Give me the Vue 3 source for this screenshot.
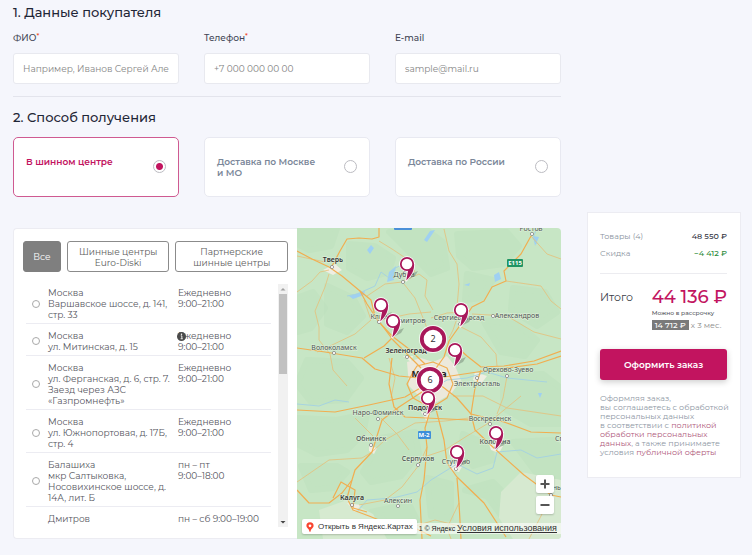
<script setup>
import { ref } from 'vue'

const fields = [
  { id: 'name', label: 'ФИО', required: true, type: 'text', placeholder: 'Например, Иванов Сергей Александрович' },
  { id: 'phone', label: 'Телефон', required: true, type: 'tel', placeholder: '+7 000 000 00 00' },
  { id: 'email', label: 'E-mail', required: false, type: 'email', placeholder: 'sample@mail.ru' }
]

const methods = [
  { id: 'center', label: 'В шинном центре' },
  { id: 'moscow', label: 'Доставка по Москве и МО' },
  { id: 'russia', label: 'Доставка по России' }
]
const method = ref('center')

const filters = [
  { id: 'all', lines: ['Все'] },
  { id: 'own', lines: ['Шинные центры', 'Euro-Diski'] },
  { id: 'partner', lines: ['Партнерские', 'шинные центры'] }
]
const filter = ref('all')

const places = [
  { id: 1, lines: ['Москва', 'Варшавское шоссе, д. 141,', 'стр. 33'], hours: ['Ежедневно', '9:00–21:00'] },
  { id: 2, lines: ['Москва', 'ул. Митинская, д. 15'], hours: ['Ежедневно', '9:00–21:00'], info: true },
  { id: 3, lines: ['Москва', 'ул. Ферганская, д. 6, стр. 7.', 'Заезд через АЗС', '«Газпромнефть»'], hours: ['Ежедневно', '9:00–21:00'] },
  { id: 4, lines: ['Москва', 'ул. Южнопортовая, д. 17Б,', 'стр. 4'], hours: ['Ежедневно', '9:00–21:00'] },
  { id: 5, lines: ['Балашиха', 'мкр Салтыковка,', 'Носовихинское шоссе, д.', '14А, лит. Б'], hours: ['пн – пт', '9:00–18:00'] },
  { id: 6, lines: ['Дмитров'], hours: ['пн – сб 9:00–19:00'] }
]
const place = ref(null)

const forests = [
  'M0 0H40L34 18L12 22L0 16Z',
  'M52 16L78 18L96 30L92 44L70 50L52 40Z',
  'M0 70L16 64L28 80L14 100L0 104Z',
  'M30 58L56 70L66 88L50 104L30 96Z',
  'M92 4L130 2L146 14L150 40L134 46L112 24Z',
  'M160 6L210 4L222 18L206 36L176 40L162 28Z',
  'M170 46L196 52L184 70L168 72Z',
  'M216 60L248 64L260 84L240 98L214 82Z',
  'M186 92L220 96L240 112L228 128L204 124Z',
  'M10 132L50 134L64 150L48 172L14 174L0 156Z',
  'M0 190L40 192L70 186L66 206L50 222L20 226L0 216Z',
  'M4 238L40 238L50 244L36 260L14 262Z',
  'M84 210L118 204L122 226L104 248L74 254L66 244Z',
  'M74 284L112 276L120 292L96 298Z',
  'M206 148L246 146L264 160V196L234 196L206 180Z',
  'M166 206L190 216L196 232L176 238L164 222Z',
  'M216 214L256 212L264 222V254L240 246Z',
  'M168 262L196 254L214 272L206 290L190 268Z',
  'M130 250L154 256L154 290L134 288Z'
]

const thinRoads = [
  'M0 28L28 34M0 64L15 53L23 44L32 42',
  'M32 46L28 59L18 83L22 99L22 112L33 126L36 142L50 158',
  'M82 13L95 21L110 31L118 44',
  'M70 68L88 56L105 54L122 46L130 52L128 68L136 82',
  'M67 72L74 92L58 106L33 118L20 124',
  'M107 56L118 70L126 90L134 110',
  'M84 92L112 86L134 84',
  'M134 90L150 85L168 84',
  'M147 1L152 23L160 36L162 56L160 79',
  'M209 53L244 58L254 73L264 81',
  'M234 8L250 26L264 31',
  'M175 86L210 88L237 104L264 111',
  'M164 99L184 109L199 126L200 138',
  'M0 254L32 232L65 230L75 224',
  'M62 277L88 272L105 259L122 237L130 219',
  'M75 224L88 212L118 195L148 193L172 190',
  'M58 190L76 208M84 190L100 206L112 222',
  'M130 228L148 222L170 208L190 196L224 168',
  'M162 275L150 300L154 311M112 300L138 292L162 298',
  'M156 168L186 168L210 180L264 188',
  'M210 148L206 170L200 186',
  'M254 267L244 288L232 311M164 79L156 102L152 110',
  'M92 130L98 150L94 170'
]

const roads = [
  'M0 23L15 31L32 39L45 48L63 63L70 76L82 94L95 108L112 121L128 136',
  'M63 63L74 72L78 88L96 112L108 124L124 140',
  'M35 38L43 23L50 11L62 10L75 11L82 9L82 0',
  'M0 120L28 124L65 130L78 141L102 148L122 150',
  'M67 130L87 118L95 110M95 130L92 156L97 179L108 189L172 192',
  'M234 8L224 26L207 43L209 53L195 59L187 73L175 79L164 96L152 113L147 129L137 143',
  'M264 123L237 133L207 138L184 139L170 128L160 119',
  'M264 128L240 136L187 143L147 149L136 150',
  'M0 182L38 184L72 177L108 169L125 159',
  'M0 262L12 275L32 275L45 265L55 252L58 242L75 224L85 192L102 179L128 162',
  'M55 252L50 270L56 282L72 288L92 296L110 296L134 308',
  'M132 162L134 180L128 200L130 219L127 252L123 272L125 311',
  'M134 160L140 185L147 212L150 235L160 249L187 275L209 309',
  'M160 250L162 275L164 311',
  'M142 156L160 170L174 186L178 202L199 222L227 247L254 267L264 269',
  'M184 142L178 160L174 186L207 194L234 204L264 205',
  'M116 144L110 156L116 170L134 180L150 170L156 156L150 140L136 134L120 138Z',
  'M36 270L44 254L58 262L56 280L70 284'
]

const rivers = [
  'M112 34L98 40L92 50L84 44L78 58L60 66L50 68',
  'M0 176L22 178L38 172L52 174',
  'M130 164L150 152L170 150L190 144L210 150L250 154',
  'M60 284L70 272L96 270L120 264L134 252L160 236L180 246L196 240L200 224L224 222L240 230L264 226',
  'M240 0L236 10L240 16'
]

const cities = [
  { x: 36, y: 34, name: 'Тверь', dx: 35, dy: 39, bold: true },
  { x: 107, y: 49, name: 'Дубна', dx: 106, dy: 54 },
  { x: 82, y: 91, name: 'Клин', dx: 82, dy: 94 },
  { x: 113, y: 95, name: 'Дмитров', dx: 127, dy: 93 },
  { x: 37, y: 122, name: 'Волоколамск', dx: 37, dy: 125 },
  { x: 109, y: 125, name: 'Зеленоград', dx: 110, dy: 129, bold: true },
  { x: 234, y: 3, name: 'Ростов', dx: 235, dy: 6 },
  { x: 162, y: 92, name: 'Сергиев Посад', dx: 163, dy: 96 },
  { x: 220, y: 90, name: 'Александров', dx: 196, dy: 88 },
  { x: 211, y: 144, name: 'Орехово-Зуево', dx: 210, dy: 148 },
  { x: 180, y: 158, name: 'Электросталь', dx: 180, dy: 150 },
  { x: 81, y: 187, name: 'Наро-Фоминск', dx: 81, dy: 191 },
  { x: 128, y: 182, name: 'Подольск', dx: 128, dy: 186, bold: true },
  { x: 74, y: 213, name: 'Обнинск', dx: 74, dy: 217, medium: true },
  { x: 193, y: 193, name: 'Воскресенск', dx: 193, dy: 196 },
  { x: 198, y: 216, name: 'Коломна', dx: 199, dy: 220, medium: true },
  { x: 121, y: 233, name: 'Серпухов', dx: 121, dy: 237, medium: true },
  { x: 159, y: 236, name: 'Ступино', dx: 159, dy: 241 },
  { x: 55, y: 272, name: 'Калуга', dx: 55, dy: 277, bold: true },
  { x: 101, y: 275, name: 'Алексин', dx: 101, dy: 278 },
  { x: 266, y: 213, name: 'Спас', dx: 270, dy: 220 },
  { x: 252, y: 262, name: 'Рязань', dx: 254, dy: 267 }
]

const pins = [
  [110, 36], [84, 77], [96, 93], [164, 82], [158, 122], [131, 170], [199, 205], [160, 224]
]
const clusters = [
  { x: 136, y: 111, count: 2 },
  { x: 133, y: 152, count: 6 }
]
</script>

<template>
  <main class="page">
    <form class="form" @submit.prevent>
      <h2 class="heading">1. Данные покупателя</h2>
      <div class="thirds fields">
        <div v-for="f in fields" :key="f.id" class="field">
          <label :for="f.id" class="label">{{ f.label }}<sup v-if="f.required" class="star">*</sup></label>
          <input :id="f.id" class="input" :type="f.type" :placeholder="f.placeholder" />
        </div>
      </div>

      <h2 class="heading second">2. Способ получения</h2>
      <div class="thirds">
        <label v-for="m in methods" :key="m.id" class="method" :class="{ active: method === m.id }">
          <span class="method-name">{{ m.label }}</span>
          <input v-model="method" class="radio" type="radio" name="method" :value="m.id" />
        </label>
      </div>

      <section class="pickup">
        <div class="list-side">
          <div class="filters">
            <button
              v-for="f in filters"
              :key="f.id"
              type="button"
              class="filter"
              :class="{ on: filter === f.id }"
              @click="filter = f.id"
            >
              <span v-for="l in f.lines" :key="l" class="line">{{ l }}</span>
            </button>
          </div>
          <div class="scroller">
            <div class="places">
              <label v-for="p in places" :key="p.id" class="place">
                <input v-model="place" class="dot" type="radio" name="place" :value="p.id" />
                <span class="address"><span v-for="l in p.lines" :key="l" class="line">{{ l }}</span></span>
                <span class="hours">
                  <span v-for="l in p.hours" :key="l" class="line">{{ l }}</span>
                  <svg v-if="p.info" class="info" viewBox="0 0 10 10" aria-hidden="true">
                    <circle cx="5" cy="5" r="5" fill="#4a4a4a" />
                    <circle cx="5" cy="2.6" r=".8" fill="#fff" />
                    <path d="M4.2 4.3H5.4V7.3M4 7.5H6.4" fill="none" stroke="#fff" />
                  </svg>
                </span>
              </label>
            </div>
            <div class="track" aria-hidden="true">
              <svg class="arrow" viewBox="0 0 10 10"><path d="M2.5 6.5L5 4L7.5 6.5Z" fill="#a0a0a0" /></svg>
              <div class="thumb"></div>
              <svg class="arrow" viewBox="0 0 10 10"><path d="M2.5 4L5 6.5L7.5 4Z" fill="#444" /></svg>
            </div>
          </div>
        </div>

        <div class="map">
          <svg class="map-art" viewBox="0 0 264 311" preserveAspectRatio="xMidYMid slice" role="img" aria-label="Карта">
            <rect width="264" height="311" fill="#c7e6c5" />
            <path v-for="d in forests" :key="d" :d="d" fill="#bee1be" opacity=".55" stroke="#bee1be" stroke-width="6" stroke-linejoin="round" />
            <path d="M204 264L224 244L264 252V311H216L202 290Z" fill="#d6e9d0" />
            <path d="M22 282L50 272L76 286L90 311H26Z" fill="#d6ead0" />
            <path d="M110 134L124 130L136 134L150 128L158 138L164 152L154 166L140 174L122 168L112 158Z" fill="#ece9dc" />
            <path d="M26 42L38 36L45 42L36 47ZM72 218L80 220L77 226L72 223ZM152 234L166 237L162 244L154 242ZM192 216L206 218L202 225L194 222ZM178 144L190 148L184 156L176 152ZM106 128L116 128L114 134ZM160 94L168 94L164 100ZM124 184L134 184L130 194ZM50 275L64 277L58 284Z" fill="#efeee2" />
            <path d="M70 22L74 17L77 20L73 26ZM197 47L202 44L204 51L198 54ZM92 44L99 38L97 52L90 54ZM236 8L242 9L238 18ZM127 12L133 3L138 2L130 14ZM52 68L68 63L67 67L56 71ZM167 57L173 55L172 58ZM241 165L245 165L243 170Z" fill="#9fd0f2" />
            <g fill="none" stroke="#a6d3e0" stroke-linejoin="round"><path v-for="d in rivers" :key="d" :d="d" /></g>
            <g fill="none" stroke="#e6bf78" stroke-linejoin="round"><path v-for="d in thinRoads" :key="d" :d="d" stroke-width=".8" /></g>
            <g fill="none" stroke="#f1ae50" stroke-linejoin="round"><path v-for="d in roads" :key="d" :d="d" stroke-width="1.2" /></g>
            <rect x="97" y="-4" width="18" height="6" rx="1" fill="#4a8fd8" />
            <rect x="210" y="31" width="16" height="8" rx="1" fill="#1f9463" />
            <text class="shield" x="218" y="37">E115</text>
            <rect x="121" y="203" width="13" height="8" rx="1" fill="#3f8fd9" />
            <text class="shield" x="127" y="209">М-2</text>
            <text class="capital" x="132" y="149">Москва</text>
            <g v-for="c in cities" :key="c.name">
              <circle :cx="c.dx" :cy="c.dy" r="1.6" fill="#fff" stroke="#777" stroke-width=".7" />
              <text class="city" :class="{ medium: c.medium, strong: c.bold }" :x="c.x" :y="c.y">{{ c.name }}</text>
            </g>
            <g v-for="c in clusters" :key="c.count">
              <circle :cx="c.x" :cy="c.y" r="14" fill="#fff" opacity=".8" />
              <circle :cx="c.x" :cy="c.y" r="11.2" fill="#fff" stroke="#a8185a" stroke-width="3.8" />
              <text class="count" :x="c.x" :y="c.y + 3">{{ c.count }}</text>
            </g>
            <g v-for="[x, y] in pins" :key="`${x}-${y}`" :transform="`translate(${x} ${y})`">
              <path d="M0 16L6 9L11 7L8 12Z" fill="#5f6f62" opacity=".4" />
              <path d="M7.2 0C7.2 6 5 11 -.8 16.500L1.200 6Z" fill="#fff" stroke="#fff" stroke-width="1.8" stroke-linejoin="round" />
              <circle r="7.8" fill="#fff" />
              <path d="M7.2 0C7.2 6 5 11 -.8 16.500L1.200 6Z" fill="#a8185a" />
              <circle r="6.2" fill="#fff" stroke="#a8185a" stroke-width="1.8" />
            </g>
          </svg>
          <a href="#" class="open-map">
            <svg class="open-icon" viewBox="0 0 10 12" aria-hidden="true">
              <path d="M5 0A4.5 4.5 0 0 1 9.5 4.5C9.5 7.5 6 8 5.6 12H4.4C4 8 .5 7.5 .5 4.5A4.5 4.5 0 0 1 5 0Z" fill="#f8442f" />
              <circle cx="5" cy="4.5" r="1.7" fill="#fff" />
            </svg>
            Открыть в Яндекс.Картах
          </a>
          <div class="zoom">
            <button type="button" class="zoom-btn" aria-label="Приблизить">
              <svg viewBox="0 0 10 10"><path d="M5 .5V9.5M.5 5H9.5" stroke="#555" stroke-width="2" /></svg>
            </button>
            <button type="button" class="zoom-btn" aria-label="Отдалить">
              <svg viewBox="0 0 10 10"><path d="M.5 5H9.5" stroke="#555" stroke-width="2" /></svg>
            </button>
          </div>
          <p class="copyright">1 © Яндекс <a href="#" class="terms">Условия использования</a></p>
        </div>
      </section>
    </form>

    <aside class="summary">
      <dl class="sums">
        <div class="sum"><dt>Товары (4)</dt><dd>48 550 ₽</dd></div>
        <div class="sum"><dt>Скидка</dt><dd class="discount">−4 412 ₽</dd></div>
      </dl>
      <div class="total">
        <span class="total-name">Итого</span>
        <div class="total-side">
          <strong class="price">44 136 ₽</strong>
          <span class="credit-note">Можно в рассрочку</span>
          <span class="credit"><b class="credit-sum">14 712 ₽</b> x 3 мес.</span>
        </div>
      </div>
      <button type="button" class="submit">Оформить заказ</button>
      <p class="legal">
        Оформляя заказ,<br />вы соглашаетесь с обработкой<br />персональных данных<br />в соответствии с
        <a href="#">политикой<br />обработки персональных<br />данных</a>, а также принимаете<br />условия
        <a href="#">публичной оферты</a>
      </p>
    </aside>
  </main>
</template>

<style>
body {
  margin: 0;
  background: #f5f6fc;
}
</style>

<style scoped>
.page {
  display: grid;
  grid-template-columns: minmax(0, 1fr) 154px;
  gap: 26px;
  align-items: start;
  padding: 2px 11px 15px 13px;
  font-family: Montserrat, Inter, "Noto Sans", sans-serif;
  font-size: 9px;
  line-height: 11px;
  color: #55565e;
}
.page *,
.page *::before {
  box-sizing: border-box;
}
button,
input {
  font: inherit;
  margin: 0;
}
.heading {
  margin: 0;
  font-size: 13px;
  line-height: 20px;
  font-weight: 500;
  color: #1f2637;
}
.heading.second {
  margin: 10px 0;
}
.thirds {
  display: grid;
  grid-template-columns: repeat(3, minmax(0, 1fr));
  gap: 25px;
}
.fields {
  padding: 9px 0 12px;
  border-bottom: 1px solid #e3e4ec;
}
.label {
  display: block;
  height: 22px;
  line-height: 14px;
  font-weight: 500;
  color: #3f4454;
}
.star {
  color: #f0502d;
  font-size: 7px;
  line-height: 0;
  vertical-align: 2px;
}
.input {
  display: block;
  width: 100%;
  height: 31px;
  padding: 0 9px;
  border: 1px solid #e8e9ef;
  border-radius: 3px;
  background: #fff;
  color: #333;
}
.input::placeholder {
  color: #858585;
  opacity: 1;
}
.method {
  display: flex;
  justify-content: space-between;
  align-items: flex-start;
  gap: 10px;
  min-height: 60px;
  padding: 18px 12px 15px;
  border: 1px solid #e8e9f1;
  border-radius: 5px;
  background: #fff;
  color: #7b8799;
  font-weight: 600;
}
.method-name {
  max-width: 104px;
}
.method.active {
  border-color: #cf5a91;
  color: #c2145f;
}
.radio,
.dot {
  appearance: none;
  flex: none;
  border: 1px solid #bcbcc2;
  border-radius: 50%;
  background: #fff;
}
.radio {
  width: 13px;
  height: 13px;
  margin-top: 4px;
}
.radio:checked {
  background: radial-gradient(circle, #c2145f 3px, #fff 4px);
}
.pickup {
  display: grid;
  grid-template-columns: minmax(0, 284fr) minmax(0, 264fr);
  margin-top: 31px;
}
.list-side {
  padding: 12px 9px 11px;
  border: 1px solid #ececf2;
  border-right: 0;
  border-radius: 4px 0 0 4px;
  background: #fff;
}
.filters {
  display: grid;
  grid-template-columns: 38fr 103fr 113fr;
  gap: 6px;
}
.filter {
  height: 31px;
  padding: 0;
  border: 1px solid #8b8b8b;
  border-radius: 3px;
  background: #fff;
  color: #5c5c5c;
}
.filter.on {
  border-color: #7f7f7f;
  background: #7f7f7f;
  color: #fff;
}
.line {
  display: block;
  white-space: nowrap;
}
.scroller {
  display: flex;
  justify-content: space-between;
  height: 243px;
  margin-top: 12px;
  overflow: hidden;
}
.places {
  flex: 1;
  margin: 0 7px 0 3px;
}
.place {
  display: grid;
  grid-template-columns: 14px minmax(0, 122fr) minmax(0, 93fr);
  column-gap: 8px;
  align-items: center;
  padding: 6px 0 3px;
  border-bottom: 1px solid #ececf2;
}
.place:first-child {
  padding-top: 3px;
}
.place:last-child {
  min-height: 60px;
  border: 0;
}
.dot {
  justify-self: end;
  width: 8px;
  height: 8px;
  border-color: #a9a9a9;
}
.address,
.hours {
  align-self: start;
}
.hours {
  position: relative;
}
.info {
  position: absolute;
  top: 2px;
  left: -1px;
  width: 9px;
  height: 9px;
}
.track {
  display: flex;
  flex-direction: column;
  width: 10px;
  background: #f1f1f1;
}
.arrow {
  width: 10px;
  height: 10px;
}
.thumb {
  width: 8px;
  height: 80px;
  margin: 0 1px auto;
  background: #c1c1c1;
}
.map {
  position: relative;
  overflow: hidden;
  border-radius: 0 4px 4px 0;
}
.map-art {
  position: absolute;
  inset: 0;
  width: 100%;
  height: 100%;
}
.city,
.capital,
.shield,
.count {
  font-family: "Noto Sans", sans-serif;
  text-anchor: middle;
}
.city {
  font-size: 7px;
  fill: #4c5550;
  paint-order: stroke;
  stroke: #e2f1dd;
  stroke-width: 1px;
}
.city.medium {
  font-weight: 500;
}
.city.strong {
  font-weight: 600;
  fill: #333;
}
.capital {
  font-size: 9px;
  font-weight: 700;
  fill: #222;
}
.shield {
  font-size: 6px;
  font-weight: 700;
  fill: #fff;
}
.count {
  font-size: 9px;
  fill: #333;
}
.open-map {
  position: absolute;
  left: 5px;
  bottom: 5px;
  display: flex;
  align-items: center;
  gap: 4px;
  height: 15px;
  padding: 0 4px;
  border-radius: 2px;
  background: #fff;
  box-shadow: 0 1px 2px rgba(0, 0, 0, 0.2);
  font-family: "Liberation Sans", sans-serif;
  font-size: 8px;
  color: #333;
  text-decoration: none;
  white-space: nowrap;
}
.open-icon {
  width: 8px;
  height: 10px;
}
.zoom {
  position: absolute;
  right: 7px;
  bottom: 25px;
  display: grid;
  gap: 3px;
}
.zoom-btn {
  display: grid;
  place-items: center;
  width: 18px;
  height: 18px;
  padding: 0;
  border: 0;
  border-radius: 2px;
  background: #fff;
  box-shadow: 0 1px 2px rgba(0, 0, 0, 0.2);
}
.zoom-btn svg {
  width: 10px;
  height: 10px;
}
.copyright {
  position: absolute;
  right: 0;
  bottom: 5px;
  margin: 0;
  padding: 0 4px;
  background: rgba(255, 255, 255, 0.6);
  font-family: "Liberation Sans", sans-serif;
  font-size: 7px;
  color: #222;
  white-space: nowrap;
}
.terms {
  font-size: 9px;
  color: #333;
}
.summary {
  margin-top: 210px;
  padding: 18px 13px 20px 12px;
  border: 1px solid #ececf2;
  background: #fff;
}
.sums {
  display: grid;
  gap: 6px;
  margin: 0;
  padding-bottom: 14px;
  border-bottom: 1px solid #ececf0;
  font-size: 8px;
}
.sum {
  display: flex;
  justify-content: space-between;
}
.sums dt {
  color: #8b93a0;
}
.sums dd {
  margin: 0;
  font-weight: 500;
  color: #2f323d;
}
.sums .discount {
  color: #2b8a3a;
}
.total {
  display: flex;
  justify-content: space-between;
  padding-top: 13px;
}
.total-name {
  font-size: 11px;
  line-height: 20px;
  color: #3a3d48;
}
.total-side {
  display: grid;
  white-space: nowrap;
}
.price {
  font-size: 18px;
  line-height: 20px;
  font-weight: 500;
  color: #c2145f;
}
.credit-note {
  font-size: 6px;
  line-height: 13px;
  font-weight: 500;
}
.credit {
  font-size: 8px;
  line-height: 10px;
  color: #8b8b8b;
}
.credit-sum {
  display: inline-block;
  padding: 0 3px;
  background: #7a7a7a;
  color: #fff;
  font-weight: 500;
}
.submit {
  width: 100%;
  height: 31px;
  margin-top: 19px;
  padding: 0;
  border: 0;
  border-radius: 3px;
  background: #c2145f;
  box-shadow: 0 2px 6px rgba(0, 0, 0, 0.2);
  color: #fff;
  font-weight: 600;
}
.legal {
  margin: 14px 0 0;
  font-size: 8px;
  line-height: 9px;
  color: #8f98a5;
  white-space: nowrap;
}
.legal a {
  color: #b05a7c;
  text-decoration: none;
}
</style>
